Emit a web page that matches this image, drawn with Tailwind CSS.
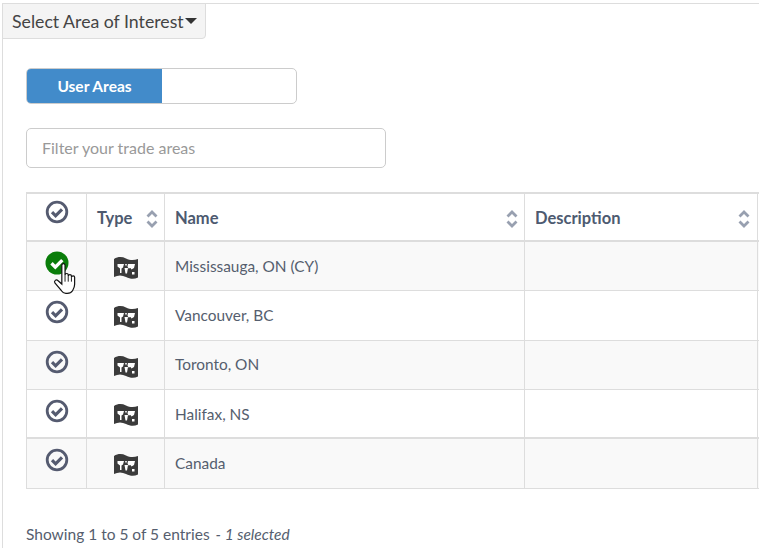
<!DOCTYPE html>
<html lang="en">
<head>
  <meta charset="UTF-8">
  <title>Select Area of Interest</title>
  <script src="https://cdn.jsdelivr.net/npm/@tailwindcss/browser@4"></script>
</head>
<body class="bg-white overflow-hidden h-[548px] w-[759px] font-['Lato','Noto_Sans',sans-serif] text-[#555e6e]">

  <svg width="0" height="0" class="absolute">
    <defs>
      <symbol id="check" viewBox="0 0 24 24">
        <circle cx="12" cy="12" r="9.800" fill="none" stroke="#555b70" stroke-width="2.800"/>
        <path d="M7 12.200l3.600 3.600 6.400-6.400" fill="none" stroke="#555b70" stroke-width="3.200"/>
      </symbol>
      <symbol id="map" viewBox="0 0 24 24">
        <path d="M0 3c4-2.500 8-2.500 12-.5s8 2 12 .5v18.500c-4 2-8 1.500-12-.5s-8-2-12 0z" fill="#3b3b3b"/>
        <path d="M3.500 8h6.500l-1 3.500-1.500 1v4.500H6v-4.500l-2.500-2zM11 8h2l-1 2.500zM14 8h7l-1 4-2.500 1.500-1-1.500-2 .5-1-2zM10.500 12h3.500l-1 5.500h-1.500zM18 16h2.500v2.500H18z" fill="#fff"/>
      </symbol>
      <symbol id="sort" viewBox="0 0 12 18">
        <path d="M1.500 6.500L6 2l4.500 4.500M1.500 11.500L6 16l4.500-4.500" fill="none" stroke="#98a0b0" stroke-width="2.800"/>
      </symbol>
    </defs>
  </svg>

  <div class="ml-[2px] mt-[3px] border-l border-t border-[#ddd] h-[545px]">
    <!-- Dropdown tab -->
    <button class="flex items-center h-[36px] w-[204px] -mt-px -ml-px pl-[9px] pt-[2px] bg-[#f4f4f4] border border-[#ddd] rounded-br-[4px] text-[17.700px] text-[#444] whitespace-nowrap">
      Select Area of Interest
      <span class="w-0 h-0 border-x-[6px] border-x-transparent border-t-[6px] border-t-[#333] ml-px -mt-[2px]"></span>
    </button>

    <div class="pl-[23px] pt-[29px]">
      <!-- Toggle -->
      <div class="flex w-[271px] h-[36px] border border-[#ccc] rounded-[5px] overflow-hidden">
        <div class="w-[135px] pt-[2px] bg-[#428bca] text-white text-[15.500px] font-bold flex items-center justify-center">User Areas</div>
      </div>

      <!-- Filter -->
      <input type="text" placeholder="Filter your trade areas"
        class="block mt-[24px] w-[360px] h-[40px] px-[15px] pb-[2px] border border-[#ccc] rounded-[5px] text-[16px] placeholder:text-[#999]" />

      <!-- Table -->
      <table class="mt-[24px] table-fixed border-collapse w-[760px] text-[15.400px]">
        <colgroup>
          <col class="w-[60px]"><col class="w-[78px]"><col class="w-[360px]"><col class="w-[233px]"><col>
        </colgroup>
        <thead>
          <tr class="h-[48px] border-y-2 border-[#ddd] font-bold text-[16.500px] text-[#4d5a70]">
            <th class="border-x border-[#ddd] align-top pt-[6px]"><svg class="w-[24px] h-[24px] mx-auto"><use href="#check"/></svg></th>
            <th class="border-x border-[#ddd] px-[10px] pt-[3px]"><div class="flex justify-between items-center">Type <svg class="w-[12px] h-[18px] -mr-[4px]"><use href="#sort"/></svg></div></th>
            <th class="border-x border-[#ddd] px-[10px] pt-[3px]"><div class="flex justify-between items-center">Name <svg class="w-[12px] h-[18px] -mr-[4px]"><use href="#sort"/></svg></div></th>
            <th class="border-x border-[#ddd] px-[10px] pt-[3px]"><div class="flex justify-between items-center">Description <svg class="w-[12px] h-[18px] -mr-[3px]"><use href="#sort"/></svg></div></th>
            <th class="border-l border-[#ddd]"></th>
          </tr>
        </thead>
        <tbody>
          <tr class="h-[49px] border-b border-[#ddd] bg-[#f9f9f9]">
            <td class="border-x border-[#ddd] align-top pt-[9px]">
              <div class="relative w-[24px] h-[24px] mx-auto">
                <svg class="w-[24px] h-[24px]" viewBox="0 0 24 24">
                  <circle cx="12" cy="12" r="11.500" fill="#0a7d0a"/>
                  <path d="M6.500 12.300l3.800 3.800 7-7" fill="none" stroke="#fff" stroke-width="3.400"/>
                </svg>
                <!-- hand cursor -->
                <svg class="absolute left-[8px] top-[12px] w-[27px] h-[32px]" viewBox="0 0 20 24">
                  <path d="M6.500 1.700c0-1.600 2.400-1.600 2.400 0v7.300c.2-1.500 2.400-1.500 2.400 0v.8c.2-1.500 2.400-1.500 2.400 0v.8c.2-1.400 2.400-1.300 2.400 0v5.400c0 2.400-.8 3.400-1.600 4.800-.7 1.200-2 2-4 2H9.500c-1.500 0-2.500-.8-3.300-2L1.300 15c-.9-1.700.9-3 2.400-1.700l2.800 2.500z" fill="#fff" stroke="#111" stroke-width=".9"/>
                  <path d="M8.900 9v5M11.300 9.800v4.200M13.700 10.600v3.400" stroke="#111" stroke-width=".7"/>
                </svg>
              </div>
            </td>
            <td class="border-x border-[#ddd]"><svg class="w-[24px] h-[24px] mx-auto mt-[4px]"><use href="#map"/></svg></td>
            <td class="border-x border-[#ddd] px-[10px] pt-[1px]">Mississauga, ON (CY)</td>
            <td class="border-x border-[#ddd]"></td>
            <td class="border-l border-[#ddd]"></td>
          </tr>
          <tr class="h-[50px] border-b border-[#ddd]">
            <td class="border-x border-[#ddd] align-top pt-[9px]"><svg class="w-[24px] h-[24px] mx-auto"><use href="#check"/></svg></td>
            <td class="border-x border-[#ddd]"><svg class="w-[24px] h-[24px] mx-auto mt-[4px]"><use href="#map"/></svg></td>
            <td class="border-x border-[#ddd] px-[10px] pt-[1px]">Vancouver, BC</td>
            <td class="border-x border-[#ddd]"></td>
            <td class="border-l border-[#ddd]"></td>
          </tr>
          <tr class="h-[49px] border-b border-[#ddd] bg-[#f9f9f9]">
            <td class="border-x border-[#ddd] align-top pt-[9px]"><svg class="w-[24px] h-[24px] mx-auto"><use href="#check"/></svg></td>
            <td class="border-x border-[#ddd]"><svg class="w-[24px] h-[24px] mx-auto mt-[4px]"><use href="#map"/></svg></td>
            <td class="border-x border-[#ddd] px-[10px]">Toronto, ON</td>
            <td class="border-x border-[#ddd]"></td>
            <td class="border-l border-[#ddd]"></td>
          </tr>
          <tr class="h-[49px] border-b-2 border-[#ddd]">
            <td class="border-x border-[#ddd] align-top pt-[9px]"><svg class="w-[24px] h-[24px] mx-auto"><use href="#check"/></svg></td>
            <td class="border-x border-[#ddd]"><svg class="w-[24px] h-[24px] mx-auto mt-[4px]"><use href="#map"/></svg></td>
            <td class="border-x border-[#ddd] px-[10px] pt-[3px]">Halifax, NS</td>
            <td class="border-x border-[#ddd]"></td>
            <td class="border-l border-[#ddd]"></td>
          </tr>
          <tr class="h-[50px] border-b border-[#ddd] bg-[#f9f9f9]">
            <td class="border-x border-[#ddd] align-top pt-[9px]"><svg class="w-[24px] h-[24px] mx-auto"><use href="#check"/></svg></td>
            <td class="border-x border-[#ddd]"><svg class="w-[24px] h-[24px] mx-auto mt-[4px]"><use href="#map"/></svg></td>
            <td class="border-x border-[#ddd] px-[10px]">Canada</td>
            <td class="border-x border-[#ddd]"></td>
            <td class="border-l border-[#ddd]"></td>
          </tr>
        </tbody>
      </table>

      <p class="mt-[35px] text-[15.500px] leading-[20px] whitespace-nowrap">Showing 1 to 5 of 5 entries <span class="italic ml-[2px]">- 1 selected</span></p>
    </div>
  </div>
</body>
</html>
